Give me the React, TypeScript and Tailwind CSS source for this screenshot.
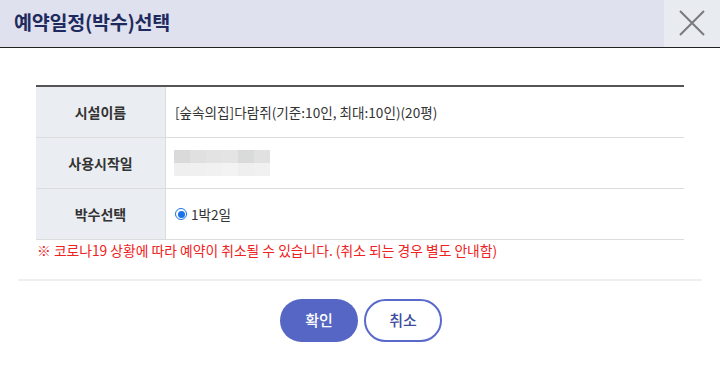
import React from 'react';

const font = { fontFamily: '"Noto Sans CJK KR", "Noto Sans", sans-serif' };

const Row: React.FC<{ label: string; children: React.ReactNode }> = ({ label, children }) => (
  <div className="flex h-[51px] border-b border-[#dcdcdc]">
    <div className="w-[130px] shrink-0 bg-[#eaedf1] border-r border-[#dcdcdc] flex items-center justify-center text-[14px] font-bold text-[#333]">
      {label}
    </div>
    <div className="flex-1 flex items-center pl-[9px] text-[13.6px] text-[#333]">{children}</div>
  </div>
);

const App: React.FC = () => {
  return (
    <div className="w-[720px] h-[381px] bg-white overflow-hidden" style={font}>
      {/* Header */}
      <div className="flex h-[48px] bg-[#dfe1ee] border-b border-[#222]">
        <h1 className="flex-1 flex items-center pl-[14px] pb-[3px] text-[19.6px] font-bold text-[#1f2b5e] tracking-[-0.3px]">
          예약일정(박수)선택
        </h1>
        <button className="w-[56px] bg-[#e8ebef] flex items-center justify-center pb-[1px]">
          <svg width="26" height="26" viewBox="0 0 26 26">
            <path d="M1 1 L25 25 M25 1 L1 25" stroke="#7a7a7e" strokeWidth="2" fill="none" />
          </svg>
        </button>
      </div>

      {/* Table */}
      <div className="mx-[36px] mt-[37px] border-t-2 border-[#555]">
        <Row label="시설이름">[숲속의집]다람쥐(기준:10인, 최대:10인)(20평)</Row>
        <Row label="사용시작일">
          <div className="flex flex-col ml-[-1px]">
            <div className="flex h-[13px]">
              <div className="w-[16px] bg-[#dadada]" />
              <div className="w-[16px] bg-[#e0e0e0]" />
              <div className="w-[16px] bg-[#e3e3e3]" />
              <div className="w-[16px] bg-[#e4e4e4]" />
              <div className="w-[16px] bg-[#d9dbda]" />
              <div className="w-[16px] bg-[#e1e1e1]" />
            </div>
            <div className="flex h-[13px]">
              <div className="w-[16px] bg-[#efefef]" />
              <div className="w-[16px] bg-[#f0f0f0]" />
              <div className="w-[16px] bg-[#f1f1f1]" />
              <div className="w-[16px] bg-[#f3f3f3]" />
              <div className="w-[16px] bg-[#efefef]" />
              <div className="w-[16px] bg-[#f1f1f1]" />
            </div>
          </div>
        </Row>
        <Row label="박수선택">
          <span className="w-[12px] h-[12px] rounded-full border-[1.5px] border-[#1a73e8] flex items-center justify-center mr-[4px]">
            <span className="w-[7px] h-[7px] rounded-full bg-[#1a73e8]" />
          </span>
          1박2일
        </Row>
        <p className="pl-[1px] text-[13.8px] leading-[20px] text-[#ee2222]">
          ※ 코로나19 상황에 따라 예약이 취소될 수 있습니다. (취소 되는 경우 별도 안내함)
        </p>
      </div>

      {/* Divider */}
      <div className="mx-[18px] mt-[19px] h-[2px] bg-[#efefef]" />

      {/* Buttons */}
      <div className="flex justify-center gap-[6px] mt-[18px] pl-[2px]">
        <button className="w-[78px] h-[43px] rounded-full bg-[#5566c4] text-white text-[15px] font-medium">
          확인
        </button>
        <button className="w-[78px] h-[43px] rounded-full border-2 border-[#5a6acb] bg-white text-[#3c4c9e] text-[15px] font-medium">
          취소
        </button>
      </div>
    </div>
  );
};

export default App;
